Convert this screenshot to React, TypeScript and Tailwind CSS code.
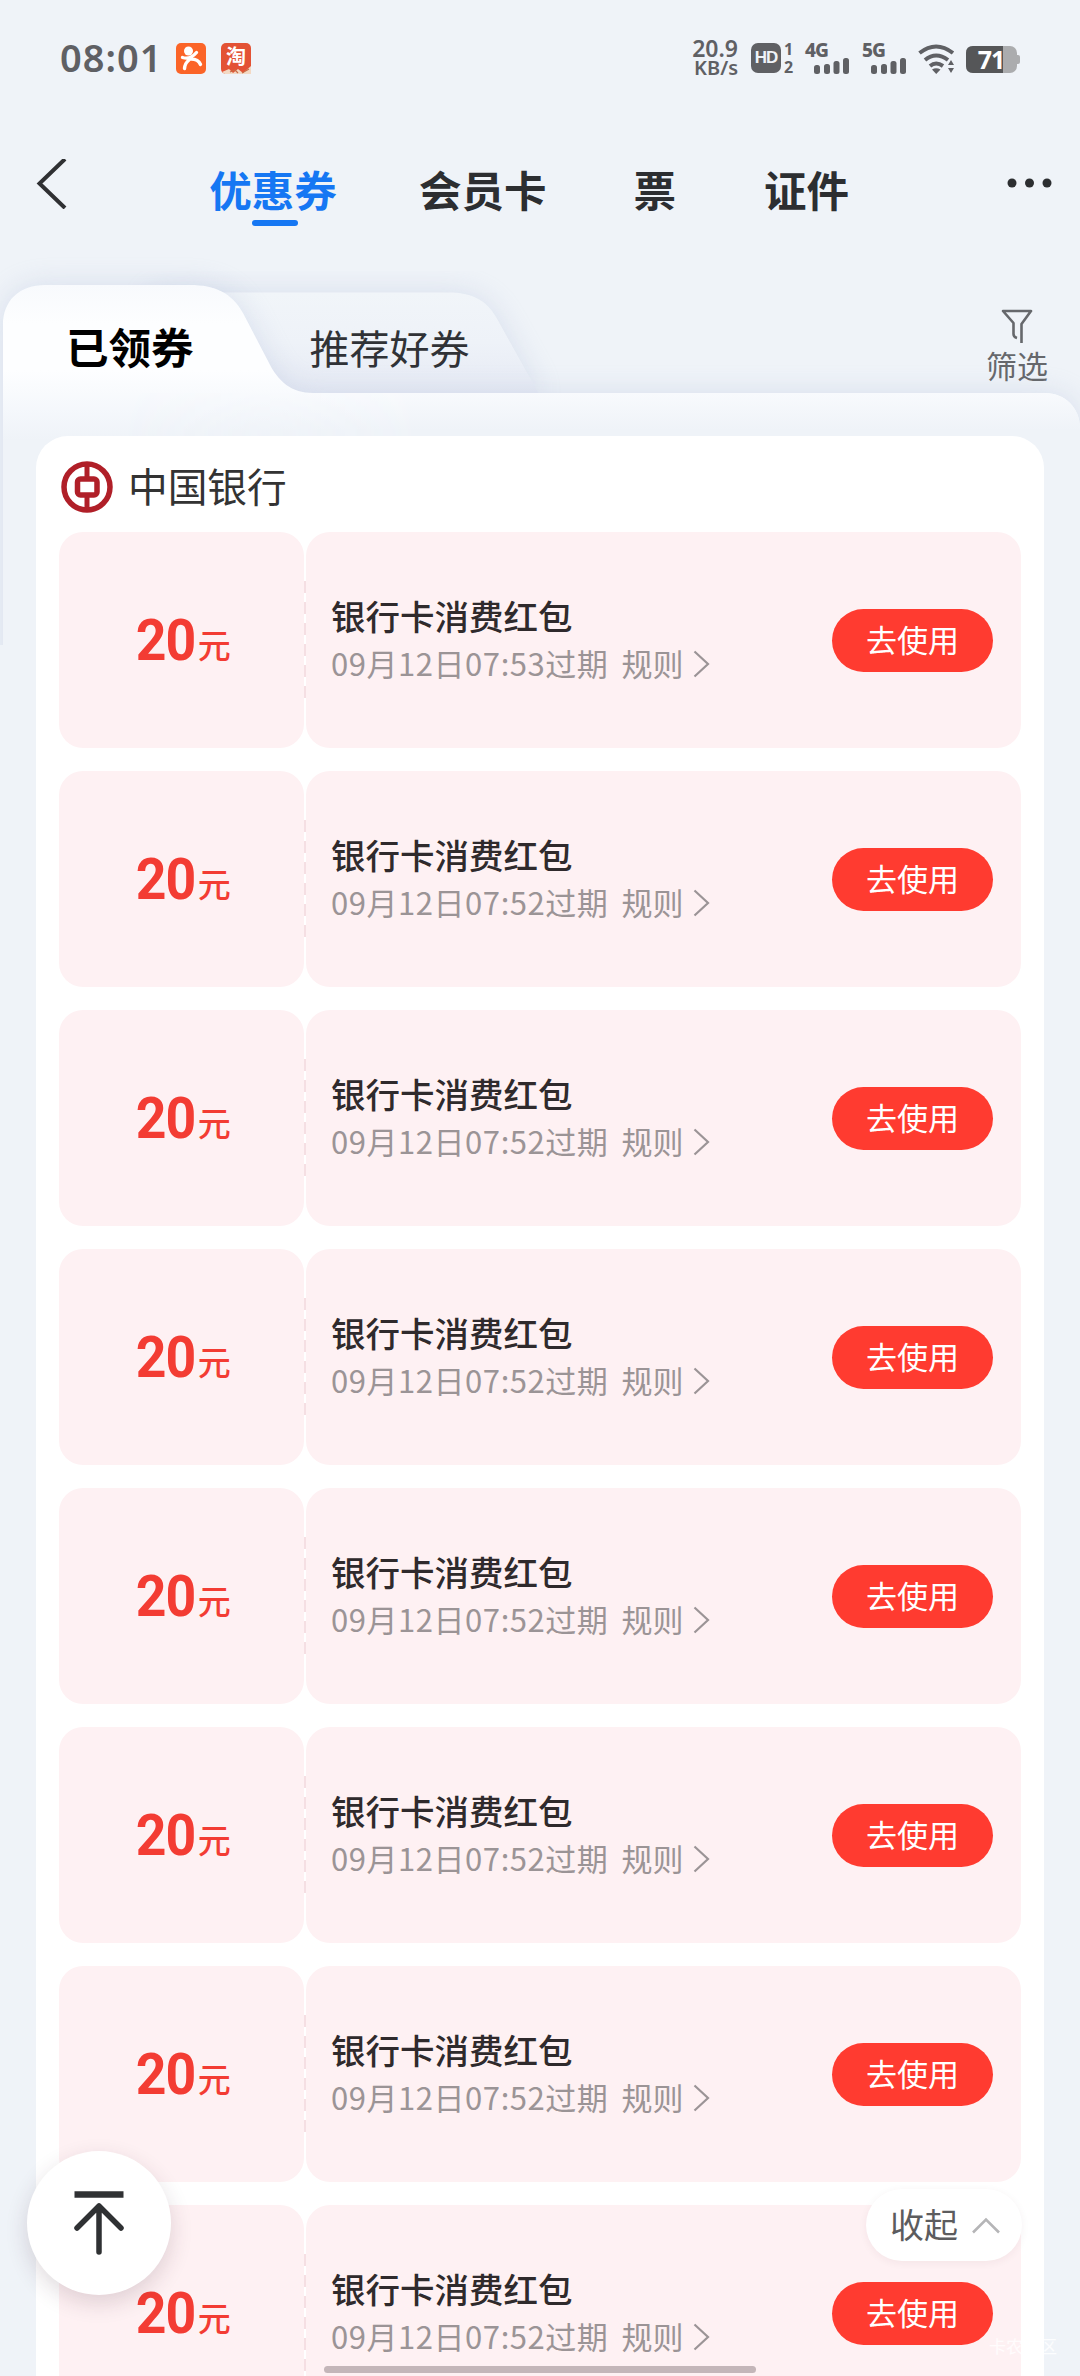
import React from 'react';

interface Coupon {
  id: number;
  amount: number;
  title: string;
  expire: string;
}

const coupons: Coupon[] = [
  { id: 1, amount: 20, title: '银行卡消费红包', expire: '09月12日07:53过期' },
  { id: 2, amount: 20, title: '银行卡消费红包', expire: '09月12日07:52过期' },
  { id: 3, amount: 20, title: '银行卡消费红包', expire: '09月12日07:52过期' },
  { id: 4, amount: 20, title: '银行卡消费红包', expire: '09月12日07:52过期' },
  { id: 5, amount: 20, title: '银行卡消费红包', expire: '09月12日07:52过期' },
  { id: 6, amount: 20, title: '银行卡消费红包', expire: '09月12日07:52过期' },
  { id: 7, amount: 20, title: '银行卡消费红包', expire: '09月12日07:52过期' },
  { id: 8, amount: 20, title: '银行卡消费红包', expire: '09月12日07:52过期' },
];

const Signal: React.FC<{ label: string }> = ({ label }) => (
  <div className="flex flex-col w-[46px] h-[32px]">
    <span className="font-['Noto_Sans'] text-[19px] leading-[14px] h-[14px] font-extrabold tracking-[-1px]">{label}</span>
    <svg width="36" height="18" viewBox="0 0 36 18" className="ml-[9px] shrink-0 -mt-px" fill="currentColor">
      <rect x="0" y="9" width="6" height="9" rx="2.5" />
      <rect x="10" y="8" width="6" height="10" rx="2.5" />
      <rect x="19.500" y="5" width="6" height="13" rx="2.500" />
      <rect x="29" y="2" width="6" height="16" rx="2.5" />
    </svg>
  </div>
);

const StatusBar: React.FC = () => (
  <div className="flex h-[116px] pt-[40px] pl-[60px] pr-[59px] text-[#5f6064]">
    <span className="font-['Noto_Sans'] text-[38px] leading-[34px] font-semibold w-[116px] tracking-[1px]">08:01</span>
    <svg width="30" height="31" viewBox="0 0 30 31" className="mt-[3px]">
      <rect width="30" height="31" rx="5" fill="#fb6428" />
      <circle cx="12.500" cy="8" r="4.500" fill="#fff" />
      <path
        d="M6.500 14.500 Q14 17 20.500 9.500 M14 16 Q22 15.500 24.500 21.500 M13 17 Q9 20 8.500 25.500"
        fill="none"
        stroke="#fff"
        strokeWidth="3.400"
        strokeLinecap="round"
      />
    </svg>
    <div className="relative w-[30px] h-[31px] mt-[3px] ml-[15px] rounded-[5px] bg-[#e35235] text-white flex justify-center">
      <span className="text-[20px] leading-[26px] font-bold">淘</span>
      <svg width="30" height="8" viewBox="0 0 30 8" className="absolute left-0 bottom-0">
        <path d="M1 6 L8 3 L12 7 L17 3 L22 7 L30 0 V8 H4 Z" fill="#f3d9c4" />
        <path d="M9 6 L14 4 L17 7 M21 7 L28 3" fill="none" stroke="#c86b45" strokeWidth="1.200" />
      </svg>
    </div>

    <div className="ml-auto flex">
      <div className="flex flex-col items-end font-['Noto_Sans'] font-semibold w-[48px] -mt-[3px]">
        <span className="text-[23px] leading-[23px]">20.9</span>
        <span className="text-[20px] leading-[16px]">KB/s</span>
      </div>
      <div className="ml-[13px] mt-[3px] w-[30px] h-[30px] rounded-[7px] bg-[#5f6064] text-[#eff3f8] text-[17px] leading-[30px] font-['Liberation_Sans'] font-bold text-center tracking-[-1px]">HD</div>
      <div className="ml-[2px] mt-[2px] w-[11px] flex flex-col items-center font-['Noto_Sans'] font-bold text-[16px] leading-[14px] gap-[4px]">
        <span>1</span>
        <span>2</span>
      </div>
      <div className="ml-[11px] mt-[3px] flex gap-[11px]">
        <Signal label="4G" />
        <Signal label="5G" />
      </div>
      <svg width="38" height="30" viewBox="0 0 38 30" className="ml-[10px] mt-[4px]">
        <g fill="none" stroke="#5f6064" strokeWidth="4">
          <path d="M1.500 9 Q18 -4 35 9" />
          <path d="M7 16 Q18 7 30 16" />
          <path d="M12 22 Q18 17 25 22" />
        </g>
        <path d="M14 25.500 Q18 23 22.500 25.500 L18.200 30 Z M30 21 L33 16 L36 21 Z M30 24 L33 29 L36 24 Z" fill="#5f6064" />
      </svg>
      <svg width="55" height="28" viewBox="0 0 55 28" className="ml-[10px] mt-[6px] overflow-visible">
        <rect x="0" y="0" width="51" height="27" rx="7" fill="#abacae" />
        <path d="M51 9 h1 q2 0 2 2 v5 q0 2 -2 2 h-1 z" fill="#abacae" />
        <path d="M37 0 H7 Q0 0 0 7 V20 Q0 27 7 27 H37 Z" fill="#555658" />
        <text x="25" y="22.500" textAnchor="middle" fill="#fff" fontFamily="Noto Sans" fontWeight="700" fontSize="25" letterSpacing="-1">71</text>
      </svg>
    </div>
  </div>
);

const NavBar: React.FC = () => (
  <div className="flex h-[169px] text-[42.500px] leading-[60px] font-bold text-[#2c2e31]">
    <svg width="32" height="50" viewBox="0 0 32 50" className="ml-[36px] mt-[43px]">
      <path d="M29 0 L3.500 24.500 L29 49" fill="none" stroke="#2f3033" strokeWidth="4" />
    </svg>
    <div className="ml-[141px] mt-[43px] w-[128px] flex flex-col items-center text-[#1677f3]">
      <span>优惠券</span>
      <span className="w-[46px] h-[6px] rounded-full bg-[#1677f3] mt-px ml-[4px]" />
    </div>
    <span className="ml-[82px] mt-[43px]">会员卡</span>
    <span className="ml-[87px] mt-[43px]">票</span>
    <span className="ml-[88px] mt-[43px]">证件</span>
    <svg width="46" height="10" viewBox="0 0 46 10" className="ml-[158px] mt-[62px]" fill="#2c2e31">
      <circle cx="5" cy="5" r="4.500" />
      <circle cx="22.500" cy="5" r="4.500" />
      <circle cx="40" cy="5" r="4.500" />
    </svg>
  </div>
);

// タブの背景形状（影付き）
const TabBackdrop: React.FC = () => (
  <svg width="1080" height="420" viewBox="0 225 1080 420" className="absolute left-0 top-[-60px]">
    <defs>
      <linearGradient id="front" gradientUnits="userSpaceOnUse" x1="0" y1="285" x2="0" y2="440">
        <stop offset="0" stopColor="#f8fafd" />
        <stop offset="0.250" stopColor="#fdfeff" />
        <stop offset="0.550" stopColor="#fdfeff" />
        <stop offset="0.800" stopColor="#f5f8fc" />
        <stop offset="1" stopColor="#eff3f8" />
      </linearGradient>
      <linearGradient id="strip" gradientUnits="userSpaceOnUse" x1="0" y1="393" x2="0" y2="430">
        <stop offset="0" stopColor="#f8fafd" />
        <stop offset="1" stopColor="#eff3f8" />
      </linearGradient>
      <linearGradient id="mix" gradientUnits="userSpaceOnUse" x1="120" y1="0" x2="420" y2="0">
        <stop offset="0" stopColor="#fff" stopOpacity="0" />
        <stop offset="1" stopColor="#fff" />
      </linearGradient>
      <mask id="fade">
        <rect x="0" y="393" width="1080" height="300" fill="url(#mix)" />
      </mask>
      <linearGradient id="back" gradientUnits="userSpaceOnUse" x1="0" y1="292" x2="0" y2="393">
        <stop offset="0" stopColor="#f1f5f9" />
        <stop offset="0.500" stopColor="#eef2f8" />
        <stop offset="1" stopColor="#e6eaf4" />
      </linearGradient>
      <filter id="shade" x="-10%" y="-20%" width="120%" height="140%" colorInterpolationFilters="sRGB">
        <feDropShadow dx="0" dy="0" stdDeviation="14" floodColor="#b4c0dc" floodOpacity="0.400" />
      </filter>
    </defs>
    <path d="M150 292.500 H448 C472 292.500 486 300 496 317 L540 396 H150 Z" fill="url(#back)" filter="url(#shade)" />
    <path
      d="M3 720 V325 C3 300 20 285 45 285 H190 C215 285 232 293 243 313 L268 361 C278 382 292 393 313 393 H1045 C1065 393 1080 408 1080 428 V720 Z"
      fill="url(#front)"
      filter="url(#shade)"
    />
    <path d="M313 393 H1045 C1065 393 1080 408 1080 428 V700 H3 V393 Z" fill="url(#strip)" mask="url(#fade)" />
  </svg>
);

const CategoryTabs: React.FC = () => (
  <div className="relative h-[151px]">
    <TabBackdrop />
    <div className="relative flex h-full">
      <span className="ml-[66px] mt-[31px] text-[42.500px] leading-[60px] font-bold text-black">已领券</span>
      <span className="ml-[116px] mt-[32px] text-[40px] leading-[60px] text-[#303236]">推荐好券</span>
      <div className="ml-auto mr-[32px] mt-[23px] flex flex-col items-center text-[#66686c]">
        <svg width="32" height="36" viewBox="0 0 32 36" fill="none" stroke="currentColor" strokeWidth="2.600" strokeLinejoin="round">
          <path d="M20.500 35 V16 L30 3 H2 L12.500 15 V26 Q12.500 29 16 30" />
        </svg>
        <span className="text-[31px] leading-[40px] mt-px">筛选</span>
      </div>
    </div>
  </div>
);

const CouponCard: React.FC<{ coupon: Coupon }> = ({ coupon }) => (
  <div className="relative flex gap-[2px] h-[216px] shrink-0">
    <div className="w-[245px] rounded-[24px] bg-[#fef1f3] flex items-baseline justify-center pt-[73px] text-[#f33c33]">
      <span className="inline-block origin-right scale-x-[0.940] font-['Roboto'] font-bold text-[57px] leading-[72px] tracking-[-1px]">{coupon.amount}</span>
      <span className="relative -top-[2px] text-[33px] font-medium ml-[2px]">元</span>
    </div>
    <div className="flex-1 rounded-[24px] bg-[#fef1f3] flex items-center pl-[25px] pr-[28px]">
      <div className="flex flex-col -mt-[3px]">
        <span className="text-[34.500px] leading-[48px] text-[#2f2a2c] font-[450]">{coupon.title}</span>
        <div className="flex items-center text-[31px] leading-[48px] text-[#9b9496]">
          <span className="tracking-[0.550px]">{coupon.expire}</span>
          <span className="ml-[13px]">规则</span>
          <svg width="17" height="28" viewBox="0 0 17 28" className="ml-[10px] mt-[2px]" fill="none" stroke="currentColor" strokeWidth="2.200">
            <path d="M1.500 1.500 L15 14 L1.500 26.500" />
          </svg>
        </div>
      </div>
      <button className="ml-auto w-[161px] h-[63px] rounded-full bg-[#ff3b30] text-white text-[31px] leading-[59px] pb-[4px]">去使用</button>
    </div>
    {/* 点線 */}
    <svg width="2" height="118" viewBox="0 0 2 118" className="absolute left-[245px] top-[49px]">
      <path d="M1 0 V118" stroke="#f5dfe3" strokeWidth="2" strokeDasharray="12 9" />
    </svg>
  </div>
);

export default function App() {
  return (
    <div className="relative w-[1080px] h-[2376px] overflow-hidden bg-[#eff3f8] font-['Noto_Sans_CJK_SC',sans-serif]">
      <StatusBar />
      <NavBar />
      <CategoryTabs />

      <div className="relative ml-[36px] w-[1008px] h-[1960px] rounded-t-[32px] bg-white pl-[23px] pr-[23px]">
        <div className="flex items-center h-[96px] pt-[5px]">
          <svg width="54" height="54" viewBox="0 0 54 54" className="ml-[1px]" fill="none" stroke="#b01f28">
            <circle cx="27" cy="27" r="23" strokeWidth="5.500" />
            <rect x="17.500" y="19" width="19.500" height="16" rx="3" strokeWidth="5.500" />
            <path d="M27 4 V18 M27 36 V50" strokeWidth="5" />
          </svg>
          <span className="ml-[14px] -mt-[4px] text-[39.700px] leading-[56px] text-[#333]">中国银行</span>
        </div>
        <div className="flex flex-col gap-[23px]">
          {coupons.map((coupon) => (
            <CouponCard key={coupon.id} coupon={coupon} />
          ))}
        </div>
      </div>

      {/* トップへ戻る */}
      <button className="absolute left-[27px] top-[2151px] w-[144px] h-[144px] rounded-full bg-white shadow-[0_8px_22px_rgba(60,30,50,0.160)] flex items-center justify-center">
        <svg width="54" height="66" viewBox="0 0 54 66" fill="none" stroke="#2f3133" strokeWidth="5.500">
          <path d="M2.500 4.500 H51.500" strokeWidth="6.500" />
          <path d="M27 62 V16 M5 38 L27 16 L49 38" strokeLinecap="round" strokeLinejoin="round" />
        </svg>
      </button>

      {/* 折りたたみ */}
      <button className="absolute left-[866px] top-[2189px] w-[156px] h-[72px] rounded-full bg-white shadow-[0_2px_8px_rgba(80,40,50,0.060)] flex items-center pl-[24px] text-[34px] leading-[60px] text-[#5c5c5e]">
        <span className="-mt-[3px]">收起</span>
        <svg width="28" height="17" viewBox="0 0 28 17" className="ml-[14px]" fill="none" stroke="#b5b5b7" strokeWidth="2.600">
          <path d="M1 15.500 L14 2.500 L27 15.500" />
        </svg>
      </button>

      <span className="absolute left-[989px] top-[2334px] text-[17px] leading-[24px] text-white/80">卡农社区</span>
      <div className="absolute left-[324px] top-[2366px] w-[432px] h-[7px] rounded-full bg-[#c4b6b9]" />
    </div>
  );
}
